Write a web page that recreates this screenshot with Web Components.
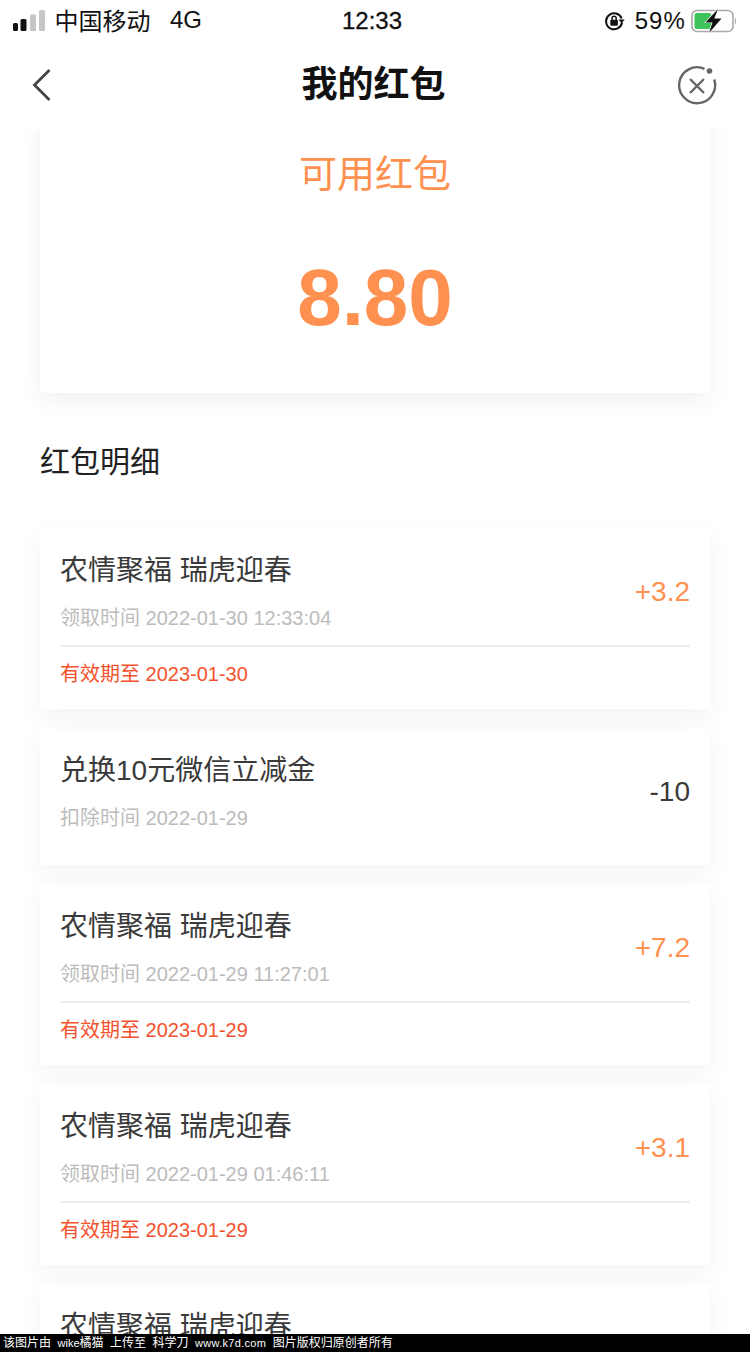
<!DOCTYPE html>
<html lang="zh">
<head>
<meta charset="utf-8">
<title>我的红包</title>
<style>
  html, body { margin: 0; padding: 0; background: #fff; }
  body { font-family: "Liberation Sans", "Noto Sans CJK SC", sans-serif; }
</style>
</head>
<body>
<wallet-page>
  <status-bar slot="top"></status-bar>
  <nav-bar slot="top" title="我的红包"></nav-bar>
  <balance-card label="可用红包" amount="8.80"></balance-card>
  <section-title>红包明细</section-title>
  <record-card name="农情聚福 瑞虎迎春" time="领取时间 2022-01-30 12:33:04" expiry="有效期至 2023-01-30" value="+3.2"></record-card>
  <record-card name="兑换10元微信立减金" time="扣除时间 2022-01-29" value="-10"></record-card>
  <record-card name="农情聚福 瑞虎迎春" time="领取时间 2022-01-29 11:27:01" expiry="有效期至 2023-01-29" value="+7.2"></record-card>
  <record-card name="农情聚福 瑞虎迎春" time="领取时间 2022-01-29 01:46:11" expiry="有效期至 2023-01-29" value="+3.1"></record-card>
  <record-card name="农情聚福 瑞虎迎春"></record-card>
  <watermark-bar slot="overlay"></watermark-bar>
</wallet-page>

<script>
// Base class: each element only provides its markup
class ShadowElement extends HTMLElement {
  constructor() {
    super();
    this.attachShadow({ mode: 'open' });
  }

  connectedCallback() {
    this.render();
  }
}

class WalletPage extends ShadowElement {
  render() {
    this.shadowRoot.innerHTML = `
      <style>
        :host {
          display: flex;
          flex-direction: column;
          position: relative;
          width: 750px;
          height: 1352px;
          overflow: hidden;
          background: #fff;
        }
        header { flex: none; background: #fff; }
        main {
          flex: 1;
          min-height: 0;
          overflow: hidden;
          display: flex;
          flex-direction: column;
          gap: 20px;
          padding: 0 40px;
        }
      </style>
      <header><slot name="top"></slot></header>
      <main><slot></slot></main>
      <slot name="overlay"></slot>
    `;
  }
}

class StatusBar extends ShadowElement {
  render() {
    this.shadowRoot.innerHTML = `
      <style>
        :host {
          display: flex;
          align-items: center;
          height: 41px;
          position: relative;
          color: #111;
          font-size: 24px;
        }
        .left { display: flex; align-items: center; padding-left: 13px; flex: 1; }
        .carrier { margin-left: 8.5px; margin-top: -2px; }
        .net { margin-left: 19.5px; margin-top: -1px; }
        .time {
          position: absolute;
          left: 342px;
          top: 6px;
          line-height: 29px;
          font-weight: 500;
          -webkit-text-stroke: .3px #111;
        }
        .right { display: flex; align-items: center; padding-right: 12px; }
        .pct { margin: 0 5px 0 10px; letter-spacing: 1.1px; }
        svg { display: block; flex: none; }
      </style>
      <div class="left">
        <svg width="33" height="22" viewBox="0 0 33 22">
          <rect x="0" y="13" width="5" height="8" rx="1.5" fill="#111"/>
          <rect x="7.5" y="9" width="6" height="12" rx="1.5" fill="#111"/>
          <rect x="17" y="4.5" width="6" height="16.5" rx="1.5" fill="#c6c6c6"/>
          <rect x="26" y="0" width="6" height="21" rx="1.5" fill="#c6c6c6"/>
        </svg>
        <span class="carrier">中国移动</span>
        <span class="net">4G</span>
      </div>
      <span class="time">12:33</span>
      <div class="right">
        <svg width="21" height="20" viewBox="0 0 21 20">
          <path d="M17.6 7.5A8 8 0 1 0 18 11.5" fill="none" stroke="#111" stroke-width="2"/>
          <path d="M14.5 8.6h6.2l-3.1 3.6z" fill="#111"/>
          <rect x="6.3" y="8.8" width="7.6" height="6" rx="1" fill="#111"/>
          <path d="M8 9V7.4a2.1 2.1 0 0 1 4.2 0V9" fill="none" stroke="#111" stroke-width="1.4"/>
        </svg>
        <span class="pct">59%</span>
        <svg width="47" height="24" viewBox="0 0 47 24">
          <rect x="1" y="1.500" width="41" height="21" rx="5" fill="none" stroke="#a9a9a9" stroke-width="1.600"/>
          <path d="M44 8.500c1.400.6 1.400 6.400 0 7z" fill="#a9a9a9"/>
          <rect x="3.500" y="4" width="17" height="16" rx="2.500" fill="#3cc45a"/>
          <path d="M27 0 14.500 13.500h7L18 24l12.500-14.500h-7.200z" fill="#111" stroke="#fff" stroke-width="1.200" paint-order="stroke"/>
        </svg>
      </div>
    `;
  }
}

class NavBar extends ShadowElement {
  render() {
    this.shadowRoot.innerHTML = `
      <style>
        :host {
          display: grid;
          grid-template-columns: 1fr auto 1fr;
          align-items: center;
          height: 88px;
          padding: 0 33px 0 32px;
          background: #fff;
        }
        h1 {
          margin: 0 2px 0 0;
          font-size: 36px;
          line-height: 48px;
          font-weight: 700;
          color: #111;
        }
        svg { display: block; }
        .close { justify-self: end; }
      </style>
      <svg width="20" height="34" viewBox="0 0 20 34">
        <path d="M17.500 2 2.500 17l15 15" fill="none" stroke="#444" stroke-width="2.800"/>
      </svg>
      <h1>${this.getAttribute('title')}</h1>
      <svg class="close" width="40" height="40" viewBox="0 0 40 40">
        <path d="M27.500 3.800A18 18 0 1 0 37.200 14.500" fill="none" stroke="#666" stroke-width="2.400"/>
        <path d="M13 14l14 14M27 14 13 28" fill="none" stroke="#666" stroke-width="2.400"/>
        <circle cx="32.500" cy="6" r="2.800" fill="#666"/>
      </svg>
    `;
  }
}

class BalanceCard extends ShadowElement {
  render() {
    this.shadowRoot.innerHTML = `
      <style>
        :host {
          display: flex;
          flex: none;
          flex-direction: column;
          align-items: center;
          margin-top: -24px;
          height: 288px;
          background: #fff;
          box-shadow: 0 8px 26px rgba(0,0,0,.06);
          border-radius: 6px;
          color: #ff9150;
        }
        .label { margin-top: 43px; font-size: 38px; line-height: 52px; }
        .amount { margin-top: 53px; font-size: 80px; line-height: 90px; font-weight: 700; }
      </style>
      <div class="label">${this.getAttribute('label')}</div>
      <div class="amount">${this.getAttribute('amount')}</div>
    `;
  }
}

class SectionTitle extends ShadowElement {
  render() {
    this.shadowRoot.innerHTML = `
      <style>
        :host {
          display: block;
          flex: none;
          padding: 28px 0 26px;
          font-size: 30px;
          line-height: 42px;
          color: #222;
        }
      </style>
      <slot></slot>
    `;
  }
}

class RecordCard extends ShadowElement {
  render() {
    const value = this.getAttribute('value') || '';
    const time = this.getAttribute('time');
    const expiry = this.getAttribute('expiry');
    // Only the received items carry an expiry row and the orange colour
    const gain = value.startsWith('+');

    this.shadowRoot.innerHTML = `
      <style>
        :host {
          display: block;
          flex: none;
          padding: 0 20px;
          background: #fff;
          box-shadow: 0 8px 24px rgba(0,0,0,.05);
        }
        .top {
          display: flex;
          justify-content: space-between;
          height: ${expiry ? 116 : 136}px;
          box-sizing: border-box;
          padding-top: 22px;
        }
        .name { font-size: 28px; line-height: 40px; color: #3a3a3a; }
        .time { margin-top: 13px; font-size: 20px; line-height: 28px; color: #bcbcbc; }
        .value { margin-top: 23px; font-size: 28px; line-height: 36px; }
        .value.gain { color: #ff9150; }
        .value.loss { color: #3a3a3a; }
        .expiry {
          border-top: 2px solid #eee;
          height: 64px;
          box-sizing: border-box;
          padding-top: 13px;
          font-size: 20px;
          line-height: 28px;
          color: #f4522d;
        }
      </style>
      <div class="top">
        <div>
          <div class="name">${this.getAttribute('name')}</div>
          ${time ? `<div class="time">${time}</div>` : ''}
        </div>
        ${value ? `<div class="value ${gain ? 'gain' : 'loss'}">${value}</div>` : ''}
      </div>
      ${expiry ? `<div class="expiry">${expiry}</div>` : ''}
    `;
  }
}

class WatermarkBar extends ShadowElement {
  render() {
    this.shadowRoot.innerHTML = `
      <style>
        :host {
          display: block;
          position: absolute;
          left: 0;
          right: 0;
          bottom: 0;
          height: 18px;
          background: #000;
        }
        div {
          display: flex;
          gap: 6.5px;
          padding-left: 3px;
          color: #fff;
          font-size: 12px;
          line-height: 18px;
          white-space: pre;
        }
        i { font-style: normal; font-size: 11px; }
        .url { letter-spacing: .3px; }
      </style>
      <div>
        <span>该图片由</span>
        <span><i>wike</i>橘猫</span>
        <span>上传至</span>
        <span>科学刀</span>
        <i class="url">www.k7d.com</i>
        <span>图片版权归原创者所有</span>
      </div>
    `;
  }
}

customElements.define('wallet-page', WalletPage);
customElements.define('status-bar', StatusBar);
customElements.define('nav-bar', NavBar);
customElements.define('balance-card', BalanceCard);
customElements.define('section-title', SectionTitle);
customElements.define('record-card', RecordCard);
customElements.define('watermark-bar', WatermarkBar);
</script>
</body>
</html>
